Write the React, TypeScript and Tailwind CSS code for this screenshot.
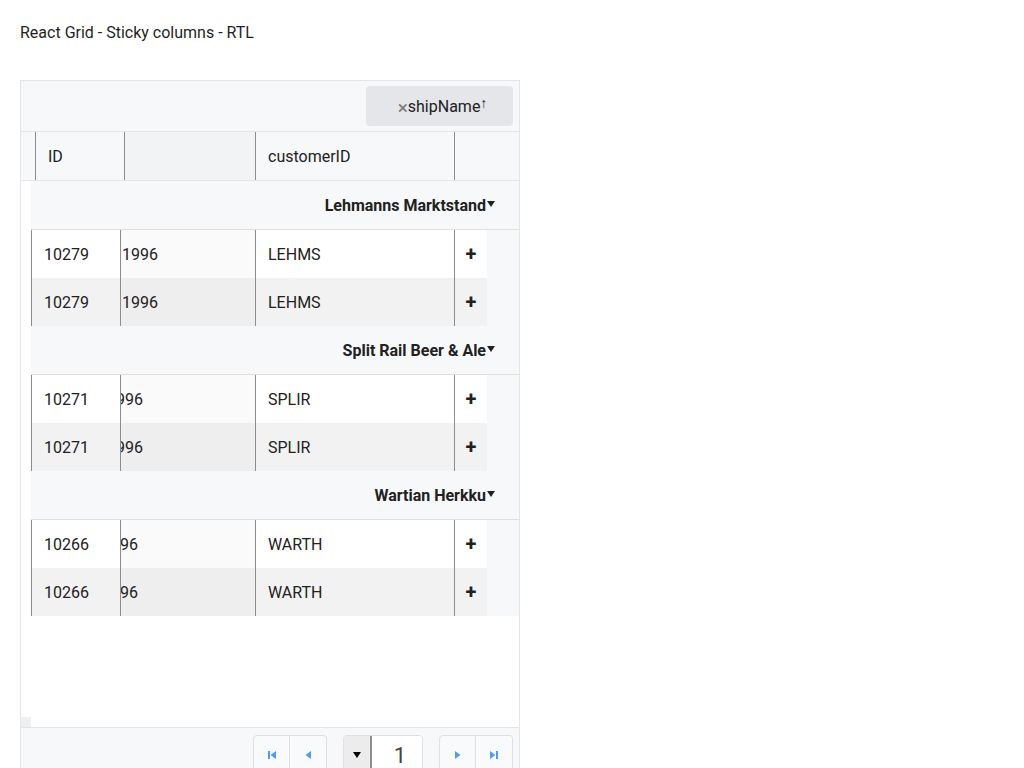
import React from 'react';

type Row = { id: string; date: string; shift: string; customer: string };
type Group = { name: string; rows: Row[] };

const groups: Group[] = [
  {
    name: 'Lehmanns Marktstand',
    rows: [
      { id: '10279', date: '1996', shift: 'ml-px', customer: 'LEHMS' },
      { id: '10279', date: '1996', shift: 'ml-px', customer: 'LEHMS' },
    ],
  },
  {
    name: 'Split Rail Beer & Ale',
    rows: [
      { id: '10271', date: '1996', shift: '-ml-[14px]', customer: 'SPLIR' },
      { id: '10271', date: '1996', shift: '-ml-[14px]', customer: 'SPLIR' },
    ],
  },
  {
    name: 'Wartian Herkku',
    rows: [
      { id: '10266', date: '1996', shift: '-ml-[19px]', customer: 'WARTH' },
      { id: '10266', date: '1996', shift: '-ml-[19px]', customer: 'WARTH' },
    ],
  },
];

const Caret = ({ className = '' }: { className?: string }) => (
  <svg width="8" height="6" viewBox="0 0 8 6" className={className}>
    <path d="M0 0h8L4 6z" fill="currentColor" />
  </svg>
);

function PagerIcon({ kind }: { kind: 'first' | 'prev' | 'next' | 'last' }) {
  const color = '#4f9cf5';
  return (
    <svg width="10" height="10" viewBox="0 0 10 10">
      {kind === 'first' && (
        <>
          <rect x="1" y="1" width="2" height="8" fill={color} />
          <path d="M9 1v8L3.5 5z" fill={color} />
        </>
      )}
      {kind === 'prev' && <path d="M8 1v8L2.5 5z" fill={color} />}
      {kind === 'next' && <path d="M2 1v8L7.5 5z" fill={color} />}
      {kind === 'last' && (
        <>
          <path d="M1 1v8L6.5 5z" fill={color} />
          <rect x="7" y="1" width="2" height="8" fill={color} />
        </>
      )}
    </svg>
  );
}

function DataRow({ row, odd }: { row: Row; odd: boolean }) {
  const base = odd ? 'bg-[#f2f2f2]' : 'bg-white';
  const mid = odd ? 'bg-[#eeeeee]' : 'bg-[#fafafa]';
  return (
    <div className="flex h-12 bg-[#f7f8fa]">
      <div className={`w-[90px] shrink-0 flex items-center pl-3 pt-[2px] border-l border-r border-[#8c8c8c] ${base}`}>
        {row.id}
      </div>
      <div className={`w-[135px] shrink-0 flex items-center pt-[2px] overflow-hidden border-r border-[#8c8c8c] ${mid}`}>
        <span className={`${row.shift} whitespace-nowrap`}>{row.date}</span>
      </div>
      <div className={`w-[199px] shrink-0 flex items-center pl-3 pt-[2px] border-r border-[#8c8c8c] ${base}`}>
        {row.customer}
      </div>
      <div className={`w-[32px] shrink-0 flex items-center justify-center font-bold text-[20px] ${base}`}>+</div>
    </div>
  );
}

export default function App() {
  return (
    <div className="p-5 text-[16px] text-[#212121]" style={{ fontFamily: 'Roboto, "Liberation Sans", sans-serif' }}>
      <div className="h-6 pt-px leading-6 mb-9 text-[#1f1f1f]">React Grid - Sticky columns - RTL</div>

      <div className="w-[500px] border border-[#e3e5e8] flex flex-col">
        {/* group by panel */}
        <div className="h-[51px] bg-[#f7f8fa] border-b border-[#e3e5e8] flex items-center justify-end pr-[6px]">
          <div className="w-[147px] h-10 rounded bg-[#e4e6ea] flex items-center justify-center pl-[6px] pt-[2px]">
            <span className="text-[#7a7a7a] text-[19px] leading-none">×</span>
            <span>shipName</span>
            <span className="text-[14px] font-bold -mt-[7px]">↑</span>
          </div>
        </div>

        {/* header */}
        <div className="h-[49px] flex bg-[#f7f8fa] border-b border-[#e3e5e8]">
          <div className="w-[15px] shrink-0 border-r border-[#8c8c8c]" />
          <div className="w-[89px] shrink-0 flex items-center pl-3 pt-[2px] border-r border-[#8c8c8c]">ID</div>
          <div className="w-[131px] shrink-0 bg-[#f2f3f4] border-r border-[#8c8c8c]" />
          <div className="w-[199px] shrink-0 flex items-center pl-3 pt-[2px] border-r border-[#8c8c8c]">customerID</div>
          <div className="flex-1" />
        </div>

        {/* body */}
        <div className="h-[547px] flex border-b border-[#e3e5e8]">
          <div className="w-[10px] shrink-0 flex flex-col justify-end bg-white">
            <div className="h-[10px] bg-[#efefef]" />
          </div>
          <div className="flex-1 flex flex-col">
            {groups.map((g) => (
              <div key={g.name} className="flex flex-col">
                <div className="h-[49px] bg-[#f7f8fa] border-b border-[#e0e0e0] flex items-center justify-end pr-[24px] pt-[2px] font-bold">
                  <span>{g.name}</span>
                  <Caret className="ml-[1px] -mt-[4px]" />
                </div>
                {g.rows.map((r, i) => (
                  <DataRow key={i} row={r} odd={i === 1} />
                ))}
              </div>
            ))}
          </div>
        </div>

        {/* footer pager */}
        <div className="h-[40px] bg-[#f7f8fa] flex items-start justify-end pr-[6px] pt-[7px] gap-4 overflow-hidden">
          <div className="flex">
            <div className="w-[37px] h-10 border border-[#e0e0e0] rounded-tl bg-[#f9fafb] flex items-center justify-center">
              <PagerIcon kind="first" />
            </div>
            <div className="w-[37px] h-10 border border-l-0 border-[#e0e0e0] rounded-tr bg-[#f9fafb] flex items-center justify-center">
              <PagerIcon kind="prev" />
            </div>
          </div>
          <div className="flex w-[80px] h-10 border border-[#e0e0e0] rounded-t overflow-hidden">
            <div className="w-[28px] bg-[#ececec] border-r-2 border-[#8c8c8c] flex items-center justify-center">
              <Caret className="text-black" />
            </div>
            <div className="flex-1 bg-white flex items-center justify-center pl-[6px] text-[22px] text-[#424242]">1</div>
          </div>
          <div className="flex">
            <div className="w-[37px] h-10 border border-[#e0e0e0] rounded-tl bg-[#f9fafb] flex items-center justify-center">
              <PagerIcon kind="next" />
            </div>
            <div className="w-[37px] h-10 border border-l-0 border-[#e0e0e0] rounded-tr bg-[#f9fafb] flex items-center justify-center">
              <PagerIcon kind="last" />
            </div>
          </div>
        </div>
      </div>
    </div>
  );
}
